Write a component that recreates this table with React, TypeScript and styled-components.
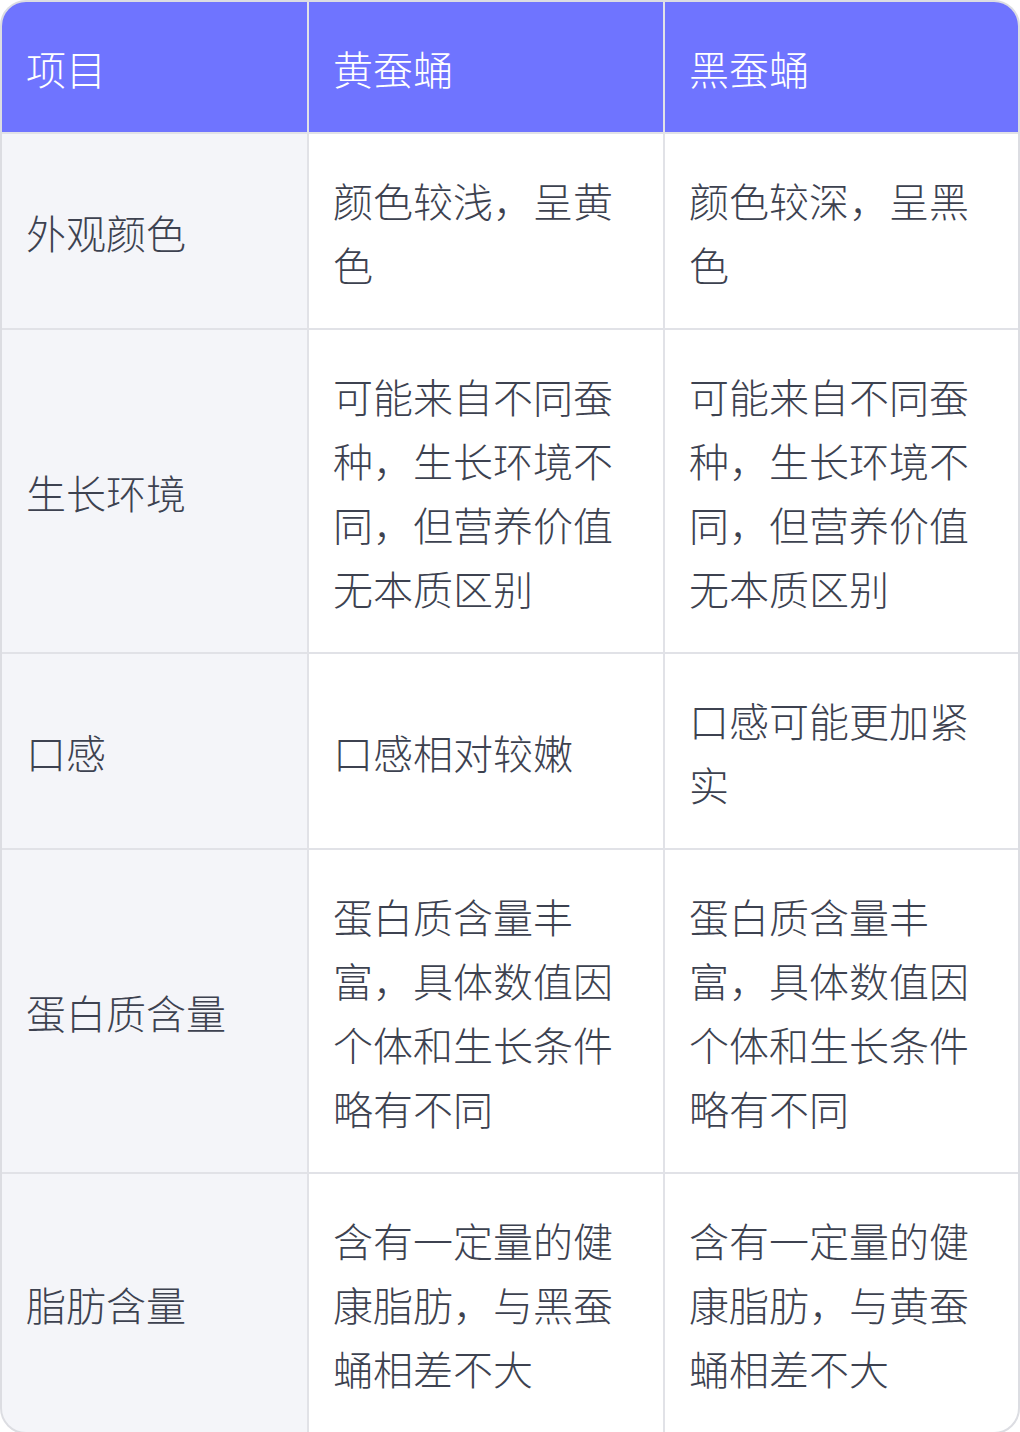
import React from 'react';
import styled, { createGlobalStyle } from 'styled-components';

const GlobalStyle = createGlobalStyle`
  html, body {
    margin: 0;
    padding: 0;
    background: #ffffff;
  }
  * {
    box-sizing: border-box;
  }
`;

const TableFrame = styled.div`
  width: 1020px;
  display: grid;
  grid-template-columns: 305px 354px 353px;
  gap: 2px;
  background: #e1e2e7;
  border: 2px solid #dcdde2;
  border-radius: 26px;
  overflow: hidden;
  font-family: 'Noto Sans CJK SC', 'Noto Sans', sans-serif;
  font-size: 40px;
  font-weight: 300;
  line-height: 64px;
`;

const HeadCell = styled.div`
  background: #6f74ff;
  color: #ffffff;
  padding: 34px 24px 32px;
  display: flex;
  align-items: center;
`;

const Cell = styled.div<{ $label?: boolean }>`
  background: ${(p) => (p.$label ? '#f4f5f9' : '#ffffff')};
  color: #3d4250;
  padding: 34px 24px 32px;
  display: flex;
  align-items: center;
`;

const headers = ['项目', '黄蚕蛹', '黑蚕蛹'];

const rows: [string, string, string][] = [
  ['外观颜色', '颜色较浅，呈黄色', '颜色较深，呈黑色'],
  ['生长环境', '可能来自不同蚕种，生长环境不同，但营养价值无本质区别', '可能来自不同蚕种，生长环境不同，但营养价值无本质区别'],
  ['口感', '口感相对较嫩', '口感可能更加紧实'],
  ['蛋白质含量', '蛋白质含量丰富，具体数值因个体和生长条件略有不同', '蛋白质含量丰富，具体数值因个体和生长条件略有不同'],
  ['脂肪含量', '含有一定量的健康脂肪，与黑蚕蛹相差不大', '含有一定量的健康脂肪，与黄蚕蛹相差不大'],
];

const App: React.FC = () => {
  return (
    <>
      <GlobalStyle />
      <TableFrame>
        {headers.map((h) => (
          <HeadCell key={h}>{h}</HeadCell>
        ))}
        {rows.map((r) => (
          <React.Fragment key={r[0]}>
            <Cell $label>{r[0]}</Cell>
            <Cell>{r[1]}</Cell>
            <Cell>{r[2]}</Cell>
          </React.Fragment>
        ))}
      </TableFrame>
    </>
  );
};

export default App;
